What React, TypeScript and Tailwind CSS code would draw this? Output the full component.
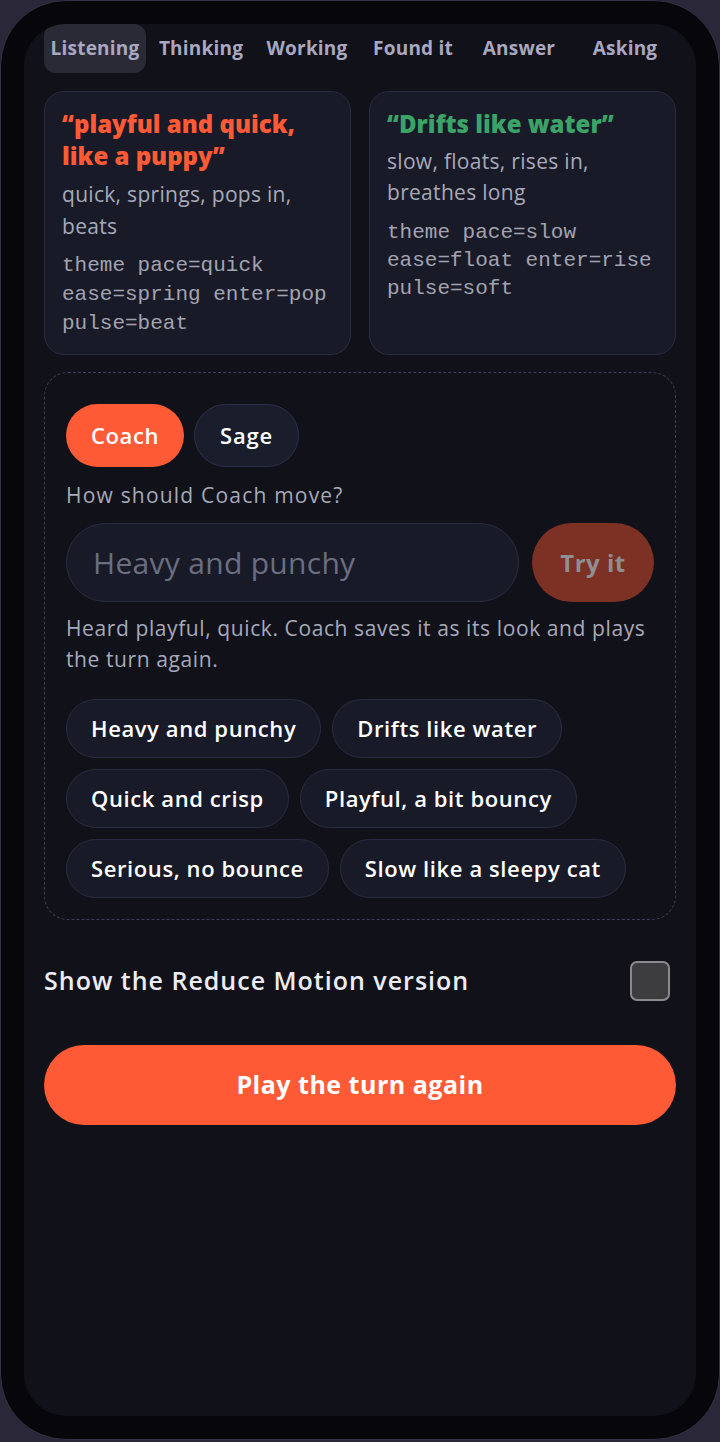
import React from "react";

const FONT = "font-['Open_Sans','Noto_Sans',sans-serif]";

const tabs = ["Listening", "Thinking", "Working", "Found it", "Answer", "Asking"];
const chips = [
  ["Heavy and punchy", "Drifts like water"],
  ["Quick and crisp", "Playful, a bit bouncy"],
  ["Serious, no bounce", "Slow like a sleepy cat"],
];

export default function App() {
  return (
    <div className={`w-[720px] h-[1442px] bg-[#2a2738] ${FONT}`}>
      <div className="h-[1440px] rounded-[66px] bg-[#07070b] border border-[#34314a] p-[23px]">
        <div className="h-full rounded-[42px] bg-[#111119] overflow-hidden px-5">
          {/* Tabs */}
          <div className="grid grid-cols-6 gap-1 h-[49px]">
            {tabs.map((t, i) => (
              <div
                key={t}
                className={`flex items-center justify-center rounded-xl text-[19px] tracking-[0.2px] font-bold text-[#aaa7c0] whitespace-nowrap ${
                  i === 0 ? "bg-[#2a2a36]" : ""
                }`}
              >
                {t}
              </div>
            ))}
          </div>

          {/* Cards */}
          <div className="grid grid-cols-2 gap-[18px] mt-[18px]">
            <div className="rounded-[20px] bg-[#181a28] border border-[#2a2d42] px-[17px] pt-[16px] pb-[16px]">
              <div className="text-[24px] leading-[32px] font-extrabold text-[#ff5a36]">
                “playful and quick, like a puppy”
              </div>
              <div className="mt-1.5 text-[21px] leading-[32px] tracking-[0.3px] text-[#a8a9b8]">
                quick, springs, pops in, beats
              </div>
              <div className="mt-[9px] font-['Liberation_Mono',monospace] text-[21px] leading-[29px] text-[#a3a3b0]">
                theme pace=quick ease=spring enter=pop pulse=beat
              </div>
            </div>
            <div className="rounded-[20px] bg-[#181a28] border border-[#2a2d42] px-[17px] pt-[16px] pb-[16px]">
              <div className="text-[24px] leading-[32px] font-extrabold text-[#3ba368]">
                “Drifts like water”
              </div>
              <div className="mt-1.5 text-[21px] leading-[31px] tracking-[0.3px] text-[#a8a9b8]">
                slow, floats, rises in, breathes long
              </div>
              <div className="mt-[11px] font-['Liberation_Mono',monospace] text-[21px] leading-[28px] text-[#a3a3b0]">
                theme pace=slow ease=float enter=rise pulse=soft
              </div>
            </div>
          </div>

          {/* Dashed section */}
          <div className="mt-[17px] rounded-[24px] border-[1.5px] border-dashed border-[#3d4055] pt-[31px] px-[21px] pb-[21px]">
            <div className="flex gap-[10px]">
              <div className="h-[63px] px-[25px] rounded-full bg-[#ff5a36] flex items-center text-[22px] tracking-[0.6px] font-semibold text-white">
                Coach
              </div>
              <div className="h-[63px] px-[25px] rounded-full bg-[#1a1d2c] border border-[#2d3048] flex items-center text-[22px] tracking-[0.8px] font-semibold text-white">
                Sage
              </div>
            </div>
            <div className="mt-[13px] text-[21px] leading-[30px] tracking-[1.2px] text-[#a7a9b9]">
              How should Coach move?
            </div>
            <div className="mt-[13px] flex gap-[13px]">
              <div className="flex-1 h-[79px] rounded-full bg-[#181a28] border border-[#2a2d42] flex items-center pl-[26px] text-[30px] tracking-[0.3px] text-[#6b6e80]">
                Heavy and punchy
              </div>
              <div className="w-[122px] h-[79px] rounded-full bg-[#7d3024] flex items-center justify-center text-[24px] tracking-[0.5px] font-bold text-[#8f8e93]">
                Try it
              </div>
            </div>
            <div className="mt-[11px] text-[21px] leading-[31px] tracking-[0.6px] text-[#a7a9b9]">
              Heard playful, quick. Coach saves it as its look and plays the turn again.
            </div>
            <div className="mt-[24px] flex flex-col gap-[11px]">
              {chips.map((row, r) => (
                <div key={r} className="flex gap-[11px]">
                  {row.map((c) => (
                    <div
                      key={c}
                      className="h-[59px] px-6 rounded-full bg-[#181a28] border border-[#2a2d42] flex items-center text-[22px] tracking-[0.6px] font-semibold text-white whitespace-nowrap"
                    >
                      {c}
                    </div>
                  ))}
                </div>
              ))}
            </div>
          </div>

          {/* Reduce motion */}
          <div className="mt-[41px] flex items-center justify-between h-[40px]">
            <div className="text-[25px] font-semibold tracking-[1px] text-[#ececf3]">
              Show the Reduce Motion version
            </div>
            <div className="w-[40px] h-[40px] rounded-[7px] bg-[#3d3d40] border-2 border-[#8a8a8e] mr-[6px]" />
          </div>

          {/* Play */}
          <div className="mt-[44px] h-[80px] rounded-full bg-[#ff5a36] flex items-center justify-center text-[25px] tracking-[0.5px] font-bold text-white">
            Play the turn again
          </div>
        </div>
      </div>
    </div>
  );
}
